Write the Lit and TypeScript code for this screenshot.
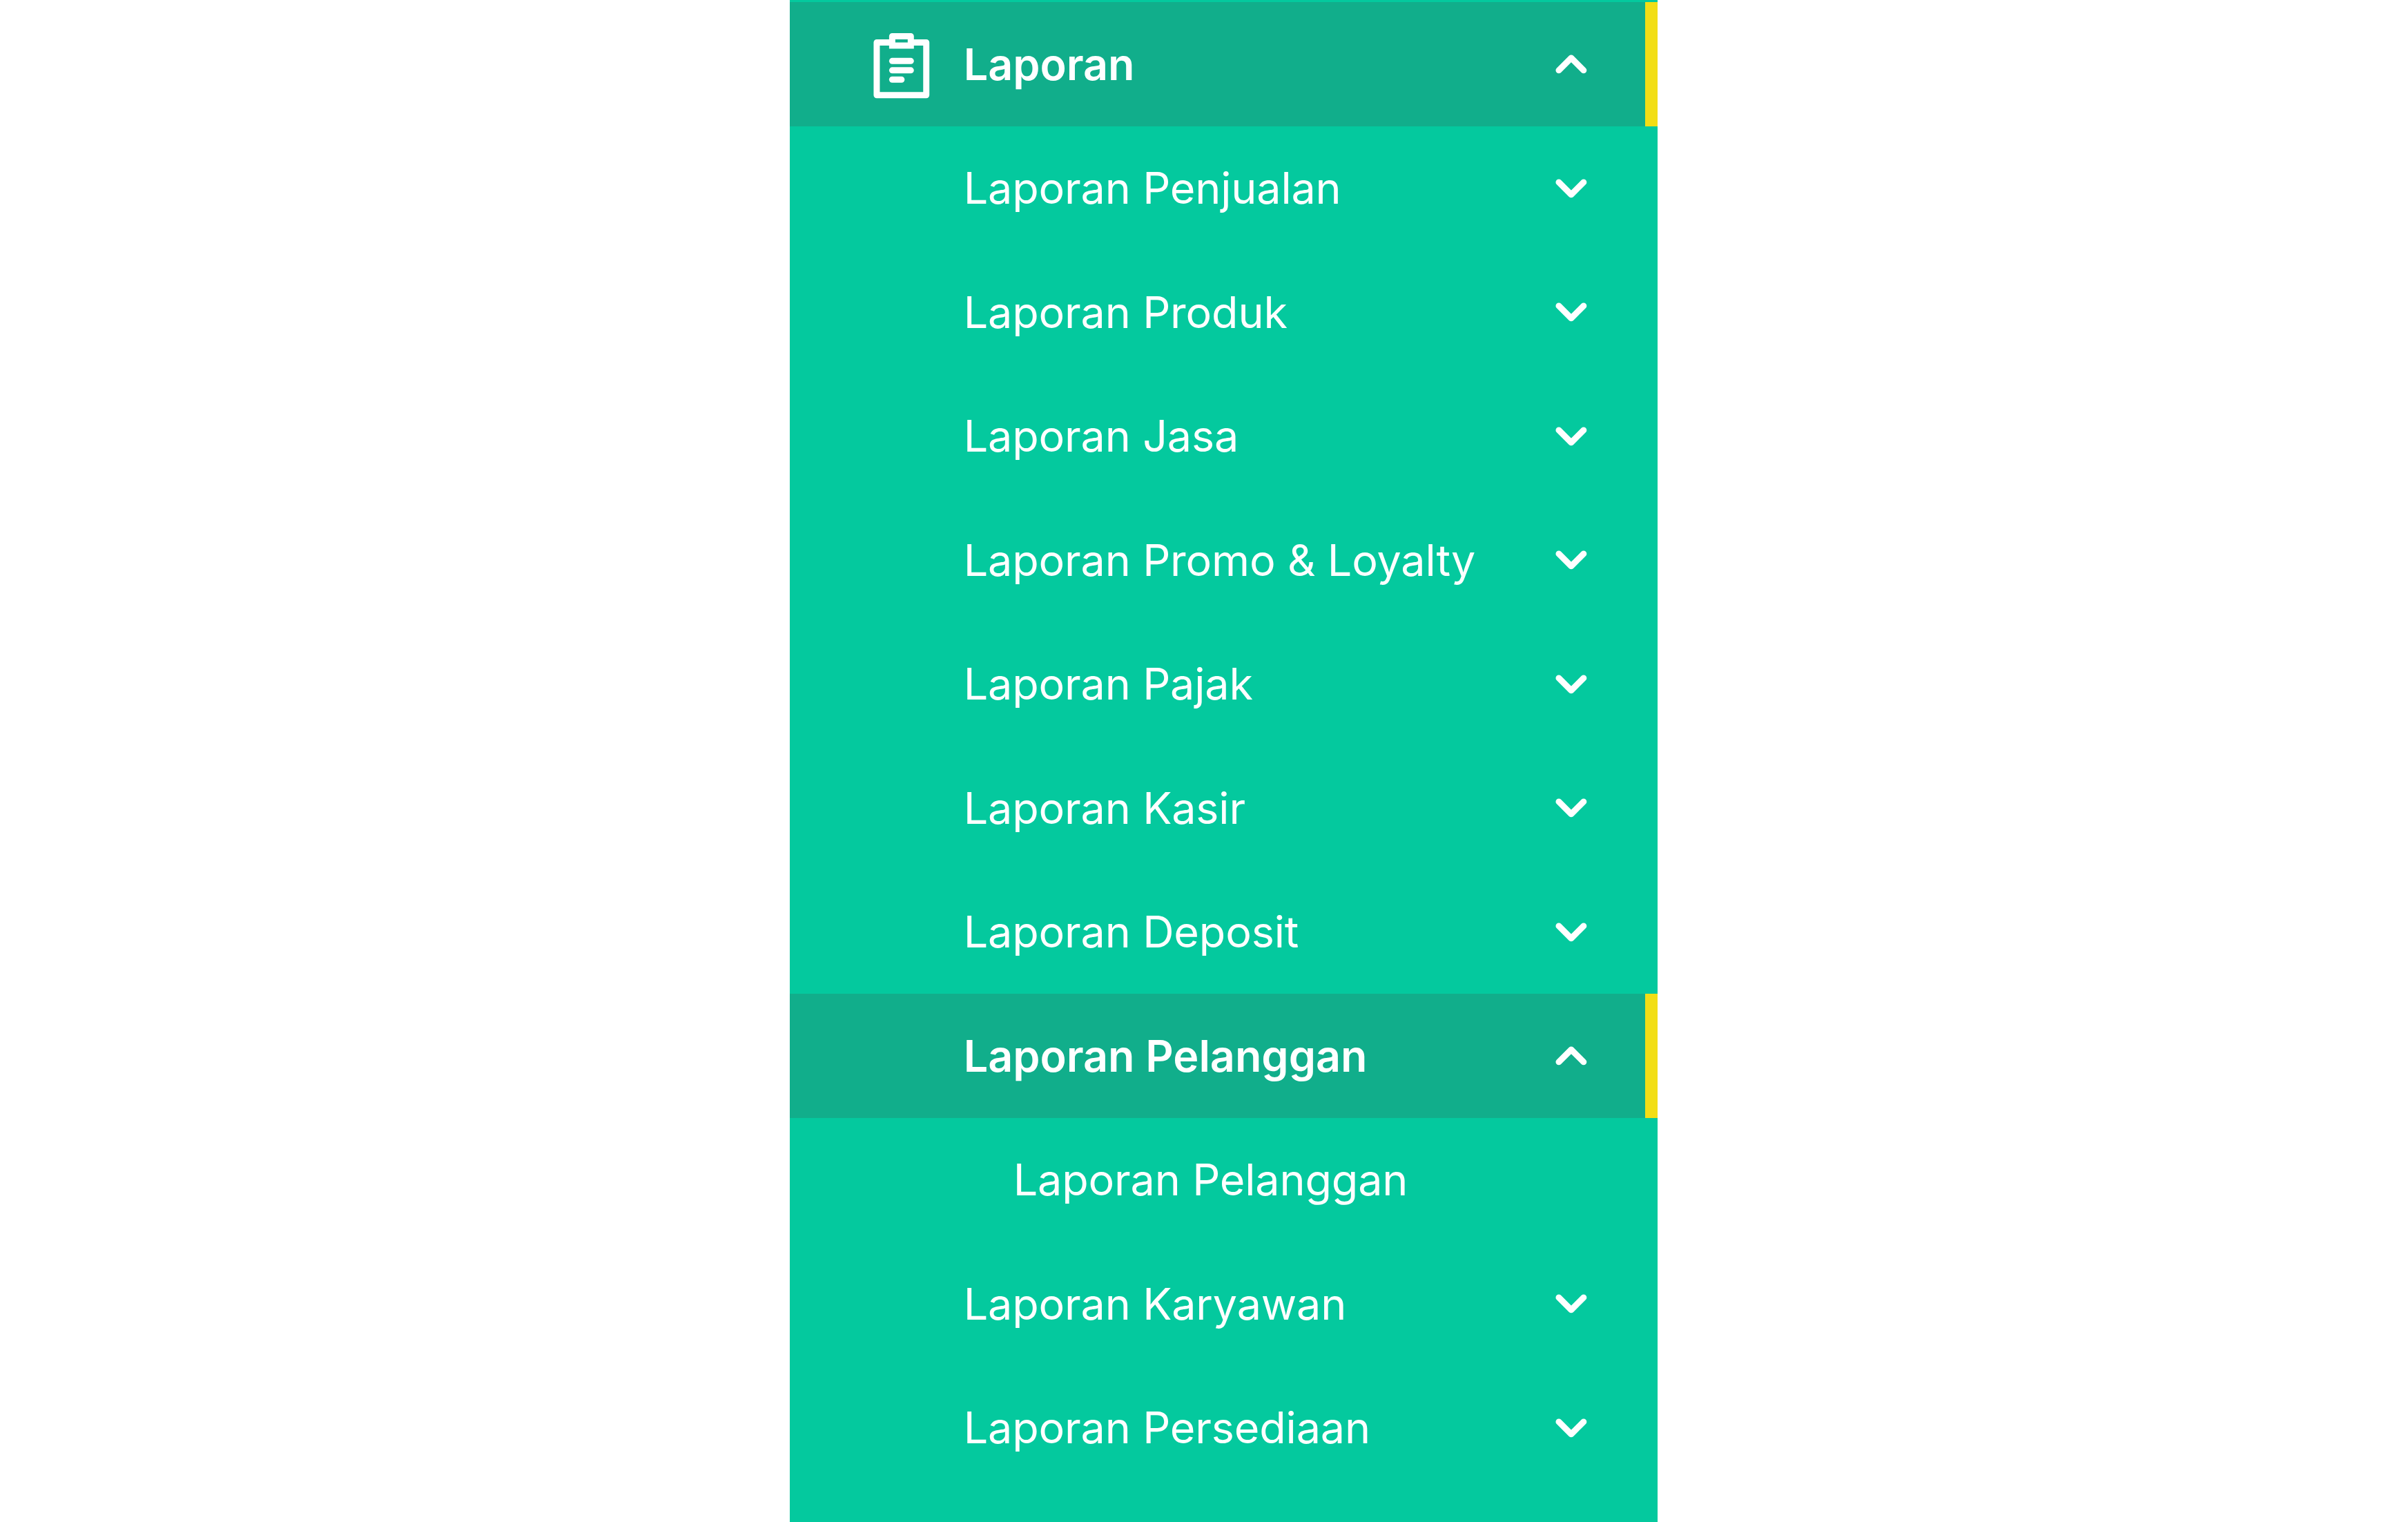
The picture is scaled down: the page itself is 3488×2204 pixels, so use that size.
import { html, css, svg, LitElement } from "lit"
import { customElement, property } from "lit/decorators.js"
import { classMap } from "lit/directives/class-map.js"

const items = [
  { label: "Laporan", icon: true, active: true },
  { label: "Laporan Penjualan" },
  { label: "Laporan Produk" },
  { label: "Laporan Jasa" },
  { label: "Laporan Promo & Loyalty" },
  { label: "Laporan Pajak" },
  { label: "Laporan Kasir" },
  { label: "Laporan Deposit" },
  { label: "Laporan Pelanggan", active: true },
  { label: "Laporan Pelanggan", child: true },
  { label: "Laporan Karyawan" },
  { label: "Laporan Persediaan" },
]

@customElement("menu-item")
export class MenuItem extends LitElement {
  @property()
  label: string

  @property({ type: Boolean })
  icon = false

  @property({ type: Boolean })
  active = false

  @property({ type: Boolean })
  child = false

  static styles = css`
    :host {
      display: block;
    }

    .row {
      display: flex;
      align-items: center;
      box-sizing: border-box;
      height: 179.5px;
      padding-left: 108px;
      padding-right: 89.5px;
      color: #fff;
      font-size: 62.85px;
      letter-spacing: -0.16px;
      line-height: 90px;
      white-space: nowrap;
    }

    .active {
      padding-right: 71.5px;
      border-right: 18px solid #f2de15;
      background-color: #11ae8b;
      font-weight: 600;
      letter-spacing: -0.03px;
    }

    .icon {
      flex: none;
      width: 107.7px;
      height: 107.7px;
      margin-right: 36px;
    }

    .label {
      flex: 1;
    }

    .child .label {
      padding-left: 72px;
    }

    .chevron {
      flex: none;
      width: 71.8px;
      height: 71.8px;
      margin-top: 0.6px;
    }
  `

  protected render() {
    return html`
      <div class="row ${classMap({ active: this.active, child: this.child })}">
        <svg class="icon" viewBox="0 0 24 24" fill="#fff">
          ${this.icon
            ? svg`
              <path fill-rule="evenodd" d="M9 2h6a1 1 0 0 1 1 1v1h4a1 1 0 0 1 1 1v17a1 1 0 0 1-1 1H4a1 1 0 0 1-1-1V5a1 1 0 0 1 1-1h4V3a1 1 0 0 1 1-1ZM10 4v1h4V4ZM5 6v15h14V6h-3v1H8V6Z" />
              <rect x="8" y="10" width="8" height="2" rx="1" />
              <rect x="8" y="13" width="8" height="2" rx="1" />
              <rect x="8" y="16" width="5" height="2" rx="1" />`
            : ""}
        </svg>
        <span class="label">${this.label}</span>
        ${this.child
          ? ""
          : html`
            <svg class="chevron" viewBox="0 0 16 16" fill="none" stroke="#fff" stroke-width="2" stroke-linecap="round" stroke-linejoin="round">
              <path d="${this.active ? "m4 10 4-4 4 4" : "m4 6 4 4 4-4"}" />
            </svg>`}
      </div>
    `
  }
}

@customElement("app-root")
export default class AppRoot extends LitElement {
  static styles = css`
    :host {
      display: flex;
      justify-content: center;
      box-sizing: border-box;
      height: 2204px;
      padding-left: 57px;
      background-color: #fff;
      font-family: Inter, "Liberation Sans", sans-serif;
    }

    .sidebar {
      box-sizing: border-box;
      width: 1257px;
      padding-top: 3.1px;
      overflow: hidden;
      background-color: #04c99e;
    }
  `

  protected render() {
    return html`
      <nav class="sidebar">
        ${items.map(
          (item) => html`
            <menu-item
              .label="${item.label}"
              .icon="${!!item.icon}"
              .active="${!!item.active}"
              .child="${!!item.child}"
            ></menu-item>
          `
        )}
      </nav>
    `
  }
}
